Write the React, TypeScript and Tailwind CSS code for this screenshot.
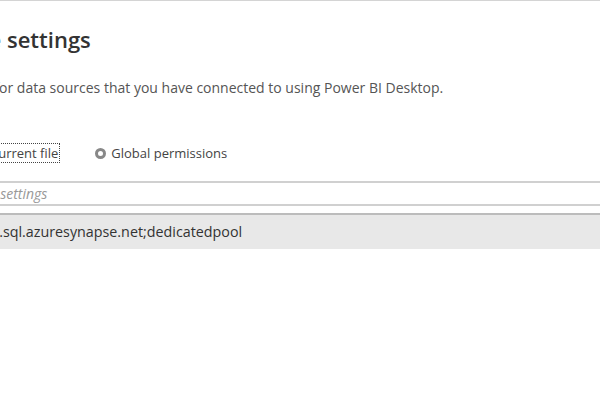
import React from "react";

export default function App() {
  const font = { fontFamily: '"Open Sans", "Noto Sans", sans-serif' };
  return (
    <div className="w-[600px] h-[400px] bg-white overflow-hidden border-t border-[#d4d4d4]" style={font}>
      <div className="whitespace-nowrap">
        <div className="-ml-[126px] pt-[23px] text-[22px] leading-[30px] font-semibold text-[#333]">
          Data source settings
        </div>
        <div className="-ml-[116px] mt-[24px] text-[14px] leading-[20px] text-[#555]">
          Manage settings for data sources that you have connected to using Power BI Desktop.
        </div>
        <div className="mt-[45px] flex items-center text-[13px] leading-[18px] text-[#444]">
          <div className="-ml-[28px] flex items-center">
            <span className="w-[11px] h-[11px] rounded-full border-[3px] border-[#333] mr-[5px]"></span>
            <span className="border border-dotted border-[#444] px-[1px]">Current file</span>
          </div>
          <div className="ml-[35px] flex items-center">
            <span className="w-[11px] h-[11px] rounded-full border-[3px] border-[#888] mr-[5px]"></span>
            <span>Global permissions</span>
          </div>
        </div>
        <div className="mt-[18px] h-[25px] border-t-2 border-b-2 border-[#d0d0d0] flex items-center">
          <span className="-ml-[122px] text-[14px] italic text-[#999]">Search data source settings</span>
        </div>
        <div className="mt-[7px] h-[36px] bg-[#e8e8e8] border-t-2 border-[#bcbcbc] flex items-center">
          <span className="-ml-[162px] text-[14.3px] text-[#333]">dedicatedws-ondemand.sql.azuresynapse.net;dedicatedpool</span>
        </div>
      </div>
    </div>
  );
}
